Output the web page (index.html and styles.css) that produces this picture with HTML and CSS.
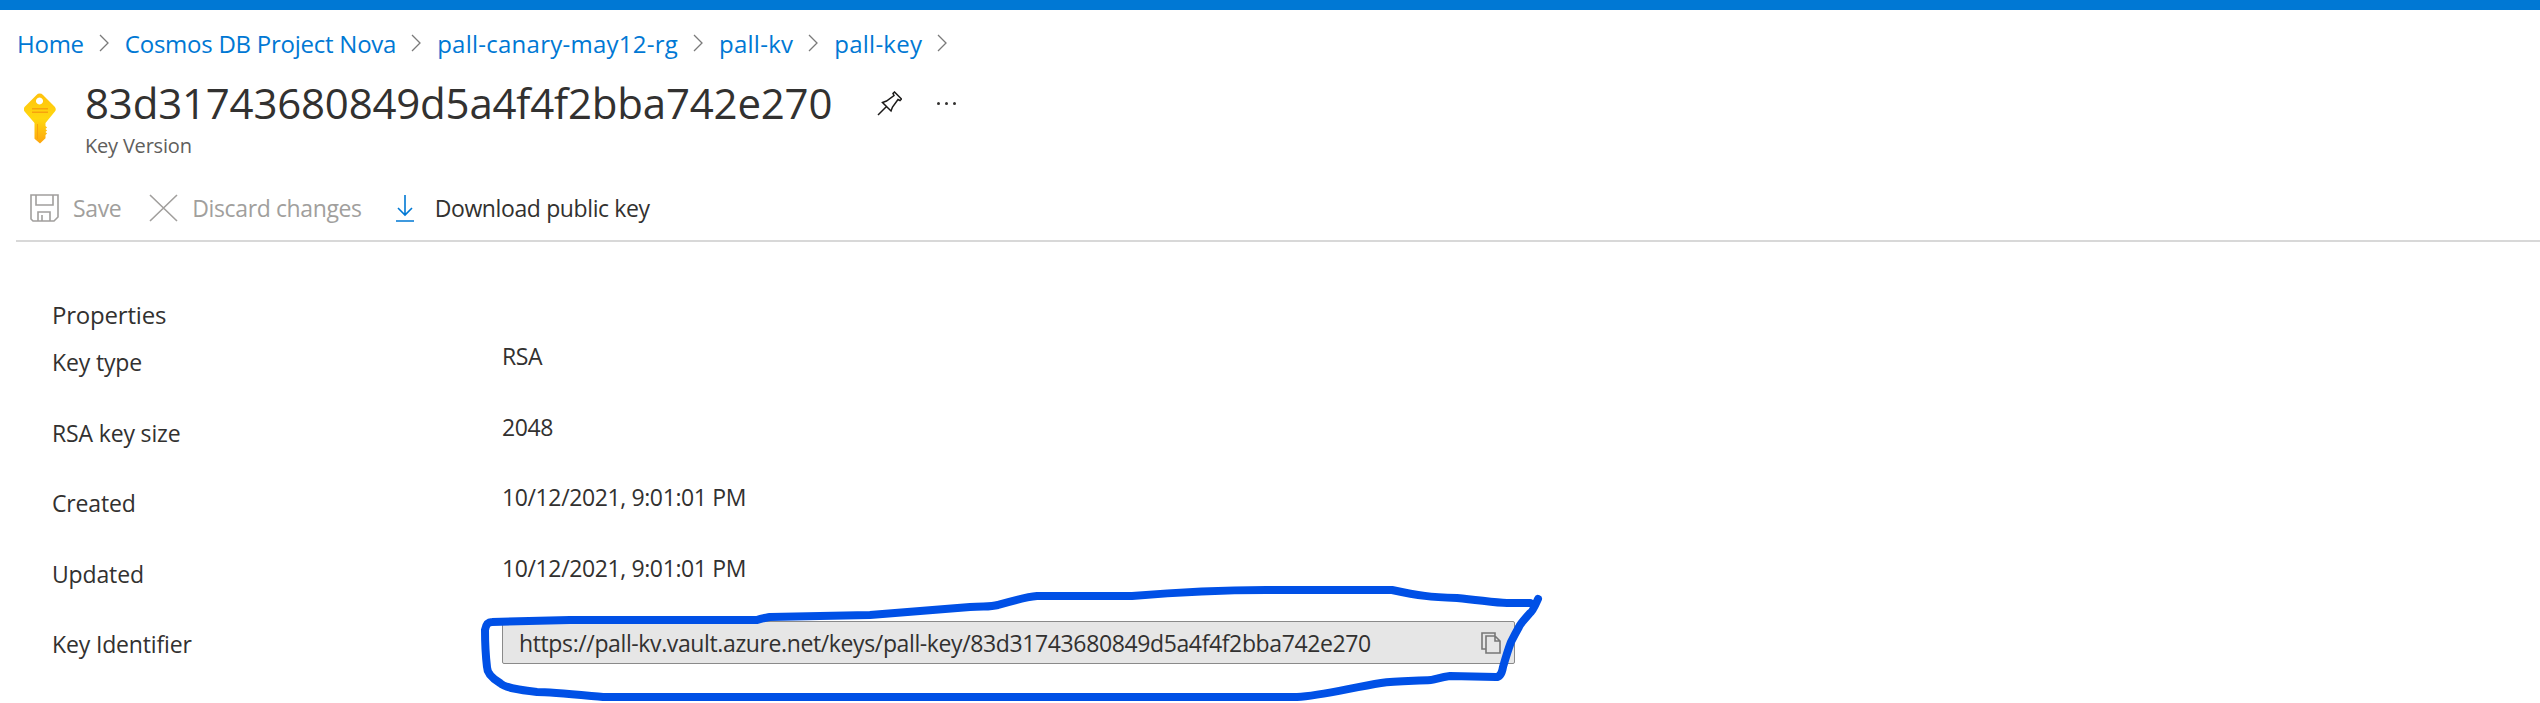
FILE: index.html
```html
<!DOCTYPE html>
<html lang="en">
<head>
<meta charset="utf-8">
<title>Key Version</title>
<link rel="stylesheet" href="styles.css">
</head>
<body>
<div class="topbar"></div>
<nav class="crumbs">
  <a class="tight">Home</a><svg class="chev" viewBox="0 0 10 18"><path d="M1 1l8 8-8 8"/></svg>
  <a class="tight">Cosmos DB Project Nova</a><svg class="chev" viewBox="0 0 10 18"><path d="M1 1l8 8-8 8"/></svg>
  <a>pall-canary-may12-rg</a><svg class="chev" viewBox="0 0 10 18"><path d="M1 1l8 8-8 8"/></svg>
  <a>pall-kv</a><svg class="chev" viewBox="0 0 10 18"><path d="M1 1l8 8-8 8"/></svg>
  <a>pall-key</a><svg class="chev" viewBox="0 0 10 18"><path d="M1 1l8 8-8 8"/></svg>
</nav>
<header class="head">
  <svg class="key" viewBox="0 0 32 51">
    <defs>
      <linearGradient id="kg" x1="0" y1="0" x2="0" y2="1">
        <stop offset="0" stop-color="#ffc20e"/><stop offset=".5" stop-color="#ffd80f"/><stop offset="1" stop-color="#fda50f"/>
      </linearGradient>
    </defs>
    <path fill="url(#kg)" fill-rule="evenodd" d="M12.500 2a4.500 4.500 0 0 1 6.500 0L30.500 13.500a4 4 0 0 1 0 5.500L21.500 30V33l1.600 1.500-1.600 1.500 1.600 1.500-1.600 1.500 1.600 1.500-1.600 1.500v3.200L16 50.500l-5.500-4.700V30L1 19a4 4 0 0 1 0-5.500z M15.500 4.500a3.500 3.500 0 1 0 .01 0z"/>
    <path class="key-mark" d="M8 15h16v1.500H8zM8 18.500h16V20H8z"/>
    <path class="key-mark" d="M13 31h1v15h-1z"/>
  </svg>
  <div class="head-text">
    <div class="title-row">
      <h1>83d31743680849d5a4f4f2bba742e270</h1>
      <svg class="pin" viewBox="0 0 25 25"><path d="M1 24l8-8M5.500 11.500l4-1.500 7.500-5.500-1-2 1.500-1.500 7 7-1.500 1.500-2-1-5.500 7.500-1.500 4z"/></svg>
      <div class="more"><i></i><i></i><i></i></div>
    </div>
    <div class="subtitle">Key Version</div>
  </div>
</header>
<div class="toolbar">
  <svg class="tool-icon save" viewBox="0 0 29 28"><path d="M1 1h27v22l-4 4H3l-2-2zM6 1v10h17V1M8 27v-9h12v9M12 21v6"/></svg>
  <span class="tool off">Save</span>
  <svg class="tool-icon discard" viewBox="0 0 29 28"><path d="M1 1l27 26M28 1L1 27"/></svg>
  <span class="tool off">Discard changes</span>
  <svg class="tool-icon download" viewBox="0 0 18 28"><path d="M9 1v20M2 14l7 7 7-7M0 27h18"/></svg>
  <span class="tool">Download public key</span>
</div>
<main class="props">
  <h2>Properties</h2>
  <div class="grid">
    <div class="lab">Key type</div><div class="val">RSA</div>
    <div class="lab">RSA key size</div><div class="val">2048</div>
    <div class="lab">Created</div><div class="val">10/12/2021, 9:01:01 PM</div>
    <div class="lab">Updated</div><div class="val">10/12/2021, 9:01:01 PM</div>
    <div class="lab">Key Identifier</div>
    <div class="field">
      <span>https://pall-kv.vault.azure.net/keys/pall-key/83d31743680849d5a4f4f2bba742e270</span>
      <svg class="copy" viewBox="0 0 20 22"><path d="M14 4V1H1v16h4M5 21V4h9l5 5v12zM14 4v5h5"/></svg>
    </div>
  </div>
</main>
<svg class="scribble" viewBox="0 0 2540 703"><path d="M1538 599C1535 606 1532 612 1530 613C1524 620 1520 624 1519 627C1515 634 1512 640 1511 642C1508 650 1505 660 1503 667C1502 673 1500 677 1496 677L1450 676C1440 677 1435 680 1431 680C1415 681 1395 681 1381 683C1350 688 1320 696 1297 697L960 697L603 697C570 694 550 692 537 692C520 690 505 688 500 683C490 677 487 672 487 667C485 650 485 640 485 630C486 624 488 622 492 622L570 620L757 620C762 618 765 618 770 617L870 615L970 607C985 606 990 607 998 605C1015 600 1025 597 1037 596L1132 596C1180 592 1220 590 1266 590L1392 590C1420 596 1430 597 1457 598C1480 600 1495 603 1507 603L1530 603"/></svg>
</body>
</html>
```
FILE: styles.css
```css
html, body { margin: 0; padding: 0; background: #fff; }
body { position: relative; width: 2540px; height: 703px; overflow: hidden; font-family: "Open Sans", "Noto Sans", sans-serif; color: #323130; }
.topbar { height: 10px; background: #0078d4; }
.crumbs { display: flex; align-items: center; height: 66px; padding-left: 17px; font-size: 24px; color: #0078d4; letter-spacing: .25px; }
.crumbs a { white-space: nowrap; }
.crumbs .tight { letter-spacing: -.25px; }
.chev { width: 10px; height: 18px; margin: 0 16px 0 15px; fill: none; stroke: #7a7a7a; stroke-width: 1.3; }
.head { display: flex; padding-left: 24px; height: 108px; }
.key { width: 32px; height: 51px; margin-top: 17px; }
.key-mark { fill: #f7a30d; }
.head-text { margin-left: 29px; }
.title-row { display: flex; align-items: center; height: 54px; }
h1 { margin: 0; font-size: 42px; font-weight: 400; line-height: 54px; letter-spacing: -.2px; color: #323130; white-space: nowrap; }
.pin { width: 25px; height: 25px; margin-left: 45px; margin-top: 1px; fill: none; stroke: #1b1a19; stroke-width: 1.5; }
.more { display: flex; gap: 5px; margin-left: 35px; margin-top: 1px; }
.more i { width: 3px; height: 3px; border-radius: 50%; background: #323130; }
.subtitle { font-size: 20px; line-height: 26px; margin-top: 3px; color: #605e5c; letter-spacing: -.2px; }
.toolbar { display: flex; align-items: center; height: 56px; margin-left: 16px; padding: 0 0 8px 14px; box-sizing: border-box; }
.tool-icon { height: 28px; fill: none; stroke-width: 1.6; flex: none; }
.tool { font-size: 23px; white-space: nowrap; letter-spacing: -.38px; }
.tool.off { color: #a19f9d; }
.save { width: 29px; stroke: #a19f9d; margin-right: 14px; }
.discard { width: 29px; stroke: #a19f9d; margin-left: 28px; margin-right: 14px; }
.download { width: 18px; stroke: #0078d4; margin-left: 34px; margin-right: 21px; }
.props { margin-left: 16px; border-top: 2px solid #d8d8d8; padding: 59px 0 0 36px; }
h2 { margin: 0; font-size: 24px; font-weight: 400; line-height: 28px; letter-spacing: -.2px; }
.grid { display: grid; grid-template-columns: 450px 1013px; grid-auto-rows: 70.5px; margin-top: 12px; font-size: 23px; letter-spacing: -.38px; }
.lab { line-height: 28px; padding-top: 7px; letter-spacing: -.15px; }
.val { line-height: 28px; padding-top: 1px; }
.field { display: flex; align-items: center; justify-content: space-between; box-sizing: border-box; height: 43px; margin-top: -2px; padding: 0 13px 0 16px; background: #e6e6e6; border: 1px solid #8a8a8a; border-radius: 2px; }
.copy { width: 20px; height: 22px; fill: none; stroke: #777; stroke-width: 1.6; }
.scribble { position: absolute; left: 0; top: 0; width: 2540px; height: 703px; fill: none; stroke: #0050e6; stroke-width: 8; stroke-linecap: round; stroke-linejoin: round; pointer-events: none; }
```
